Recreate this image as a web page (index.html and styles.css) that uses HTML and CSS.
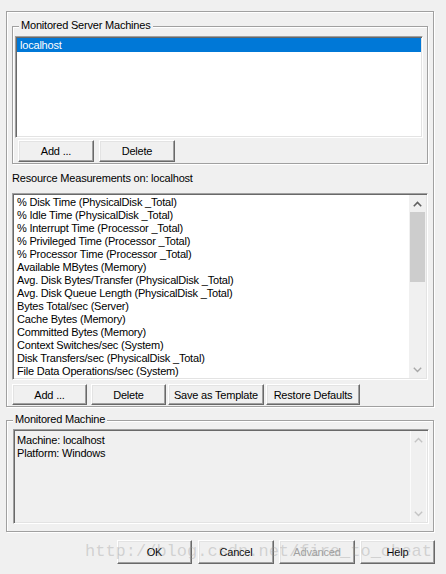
FILE: index.html
```html
<!DOCTYPE html>
<html>
<head>
<meta charset="utf-8">
<link rel="stylesheet" href="styles.css">
</head>
<body>
<div class="frame">
  <div class="group group-servers">
    <span class="legend">Monitored Server Machines</span>
    <div class="listbox list-servers">
      <div class="row selected">localhost</div>
    </div>
    <div class="btnrow btnrow-servers">
      <button class="btn w76">Add ...</button>
      <button class="btn w76">Delete</button>
    </div>
  </div>

  <div class="label">Resource Measurements on: localhost</div>

  <div class="listbox list-measures">
    <div class="items">
      <div class="item">% Disk Time (PhysicalDisk _Total)</div>
      <div class="item">% Idle Time (PhysicalDisk _Total)</div>
      <div class="item">% Interrupt Time (Processor _Total)</div>
      <div class="item">% Privileged Time (Processor _Total)</div>
      <div class="item">% Processor Time (Processor _Total)</div>
      <div class="item">Available MBytes (Memory)</div>
      <div class="item">Avg. Disk Bytes/Transfer (PhysicalDisk _Total)</div>
      <div class="item">Avg. Disk Queue Length (PhysicalDisk _Total)</div>
      <div class="item">Bytes Total/sec (Server)</div>
      <div class="item">Cache Bytes (Memory)</div>
      <div class="item">Committed Bytes (Memory)</div>
      <div class="item">Context Switches/sec (System)</div>
      <div class="item">Disk Transfers/sec (PhysicalDisk _Total)</div>
      <div class="item">File Data Operations/sec (System)</div>
      <div class="item">Free Megabytes (LogicalDisk _Total)</div>
    </div>
    <div class="vscroll">
      <div class="arrow up"><svg width="9" height="6" viewBox="0 0 9 6"><polyline points="0.8,5.2 4.5,1.5 8.2,5.2" fill="none" stroke="#606060" stroke-width="1.6"/></svg></div>
      <div class="thumb"></div>
      <div class="track"></div>
      <div class="arrow down"><svg width="9" height="6" viewBox="0 0 9 6"><polyline points="0.8,0.8 4.5,4.5 8.2,0.8" fill="none" stroke="#a8a8a8" stroke-width="1.4"/></svg></div>
    </div>
  </div>

  <div class="btnrow btnrow-measures">
    <button class="btn w75">Add ...</button>
    <button class="btn w75 gap4">Delete</button>
    <button class="btn w96">Save as Template</button>
    <button class="btn w94">Restore Defaults</button>
  </div>
</div>

<div class="group group-machine">
  <span class="legend">Monitored Machine</span>
  <div class="listbox info">
    <div class="items info-text">
      <div>Machine: localhost</div>
      <div>Platform: Windows</div>
    </div>
    <div class="vscroll disabled">
      <div class="arrow up"><svg width="9" height="6" viewBox="0 0 9 6"><polyline points="0.8,5.2 4.5,1.5 8.2,5.2" fill="none" stroke="#c4c4c4" stroke-width="1.4"/></svg></div>
      <div class="track"></div>
      <div class="arrow down"><svg width="9" height="6" viewBox="0 0 9 6"><polyline points="0.8,0.8 4.5,4.5 8.2,0.8" fill="none" stroke="#c4c4c4" stroke-width="1.4"/></svg></div>
    </div>
  </div>
</div>

<div class="dialog-buttons">
  <button class="btn dbtn w75">OK</button>
  <button class="btn dbtn w76 g6">Cancel</button>
  <button class="btn dbtn w76 g5 disabled-btn">Advanced</button>
  <button class="btn dbtn w75 g5">Help</button>
</div>

<div class="watermark">http://blog.csdn.net/fire_to_cheat</div>
</body>
</html>
```

FILE: styles.css
```css
html, body {
  margin: 0;
  padding: 0;
}
body {
  position: relative;
  width: 446px;
  height: 574px;
  overflow: hidden;
  background: #f0f0f0;
  font-family: "Liberation Sans", Arial, sans-serif;
  font-size: 11px;
  letter-spacing: -0.2px;
  color: #000;
}

.frame {
  box-sizing: border-box;
  margin: 11px 0 0 6px;
  width: 428px;
  height: 396px;
  border: 1px solid #a0a0a0;
  box-shadow: inset 1px 1px 0 #fff, 1px 1px 0 #fff;
  display: flex;
  flex-direction: column;
  align-items: flex-start;
}

.group {
  position: relative;
  box-sizing: border-box;
  border: 1px solid #a0a0a0;
  box-shadow: inset 1px 1px 0 #fff, 1px 1px 0 #fff;
}
.legend {
  position: absolute;
  top: -8px;
  left: 6px;
  padding: 0 2px;
  line-height: 13px;
  background: #f0f0f0;
  white-space: nowrap;
}

.group-servers {
  margin: 14px 0 0 5px;
  width: 416px;
  height: 138px;
  padding: 9px 4px 1px 2px;
}

.listbox {
  box-sizing: border-box;
  background: #fff;
  border-style: solid;
  border-width: 1px;
  border-color: #a0a0a0 #fff #fff #a0a0a0;
  box-shadow: inset 1px 1px 0 #696969, inset -1px -1px 0 #e3e3e3;
}

.list-servers {
  width: 408px;
  height: 102px;
  padding: 1px 1px 0 1px;
}
.row {
  height: 14px;
  line-height: 14px;
  padding-left: 3px;
  white-space: nowrap;
}
.selected {
  background: #0078d7;
  color: #fff;
}

.btnrow {
  display: flex;
}
.btnrow-servers {
  margin: 2px 0 0 3px;
  gap: 5px;
}
.btnrow-servers .btn {
  height: 22px;
}

.btn {
  box-sizing: border-box;
  margin: 0;
  padding: 0;
  font: inherit;
  letter-spacing: inherit;
  color: #000;
  background: #f0f0f0;
  border-style: solid;
  border-width: 1px;
  border-color: #fff #696969 #696969 #fff;
  box-shadow: inset -1px -1px 0 #a0a0a0, inset 1px 1px 0 #e3e3e3;
  text-align: center;
  white-space: nowrap;
}
.w75 { width: 75px; }
.w76 { width: 76px; }
.w94 { width: 94px; }
.w96 { width: 96px; }

.label {
  margin: 8px 0 0 5px;
  line-height: 13px;
  height: 13px;
}

.list-measures {
  margin: 8px 0 0 5px;
  width: 416px;
  height: 187px;
  display: flex;
  padding: 1px 1px 1px 1px;
}
.items {
  flex: 1;
  overflow: hidden;
  padding: 1px 0 0 3px;
}
.item {
  height: 13px;
  line-height: 13px;
  white-space: nowrap;
}

.vscroll {
  width: 17px;
  display: flex;
  flex-direction: column;
  background: #f0f0f0;
}
.arrow {
  height: 17px;
  flex: none;
  display: flex;
  align-items: center;
  justify-content: center;
}
.arrow svg {
  display: block;
}
.thumb {
  height: 70px;
  flex: none;
  margin: 0 1px;
  background: #cdcdcd;
}
.track {
  flex: 1;
}

.btnrow-measures {
  margin: 4px 0 0 5px;
}
.btnrow-measures .btn {
  height: 21px;
  margin-right: 2px;
}
.btnrow-measures .gap4 {
  margin-left: 2px;
}

.group-machine {
  margin: 13px 0 0 6px;
  width: 428px;
  height: 112px;
  padding: 8px 0 0 6px;
}
.info {
  width: 416px;
  height: 95px;
  background: #f0f0f0;
  display: flex;
  padding: 1px 1px 1px 1px;
}
.info-text {
  line-height: 13px;
  padding: 3px 0 0 2px;
}
.vscroll.disabled {
  border-left: 1px solid #fbfbfb;
  border-right: 1px solid #fbfbfb;
  width: 17px;
  box-sizing: border-box;
}

.dialog-buttons {
  display: flex;
  margin: 8px 0 0 117px;
}
.dbtn {
  height: 24px;
}
.g5 { margin-left: 5px; }
.g6 { margin-left: 6px; }
.disabled-btn {
  color: #a0a0a0;
}

.watermark {
  position: absolute;
  left: 85px;
  top: 541px;
  font-family: "Liberation Mono", "Courier New", monospace;
  font-size: 17px;
  letter-spacing: 0;
  line-height: 22px;
  color: rgba(150, 150, 150, 0.35);
  white-space: nowrap;
  pointer-events: none;
}
```
